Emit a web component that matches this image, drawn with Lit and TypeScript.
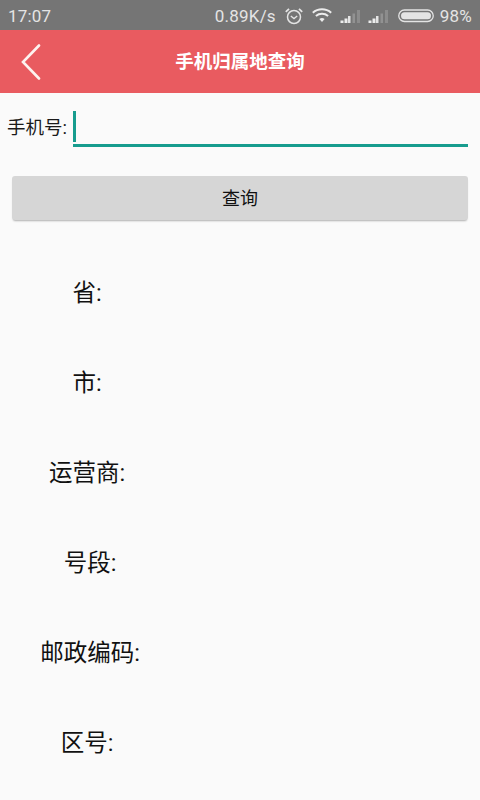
import { LitElement, html, css, svg } from "lit";
import { customElement } from "lit/decorators.js";

const rows: [string, number][] = [
  ["省:", 87],
  ["市:", 87],
  ["运营商:", 87],
  ["号段:", 90],
  ["邮政编码:", 90],
  ["区号:", 87],
];

const signal = svg`<svg class="sig" width="22" height="16" viewBox="0 0 22 16">
  <rect x="0.5" y="12.5" width="3" height="2.5" fill="#ededed"/>
  <rect x="4.5" y="10.5" width="3" height="4.5" fill="#ededed"/>
  <rect x="8" y="8" width="2.5" height="7" fill="#e4e4e4"/>
  <rect x="12.5" y="5.5" width="2.5" height="9.5" fill="#929292"/>
  <rect x="17" y="2" width="3" height="13" fill="#8c8c8c"/>
</svg>`;

@customElement("app-root")
export class AppRoot extends LitElement {
  static styles = css`
    :host {
      display: block;
      width: 480px;
      height: 800px;
      overflow: hidden;
      background: #fafafa;
      font-family: "Roboto", "Noto Sans CJK SC", sans-serif;
      color: #1a1a1a;
    }
    .status {
      height: 30px;
      box-sizing: border-box;
      background: #757575;
      color: #e4e4e4;
      display: flex;
      align-items: center;
      justify-content: space-between;
      padding: 1px 8px 0 8px;
      font-size: 17px;
      letter-spacing: 0.2px;
    }
    .status-right {
      display: flex;
      align-items: center;
    }
    .speed {
      margin-right: 8px;
    }
    .alarm {
      margin-right: 8px;
    }
    .wifi {
      margin-right: 8px;
    }
    .sig {
      margin-right: 6px;
    }
    .batt {
      margin: 0 6px 0 2px;
    }
    .appbar {
      height: 63px;
      background: #e95b60;
      display: grid;
      grid-template-columns: 1fr auto 1fr;
      align-items: center;
      color: #fff;
    }
    .back {
      display: block;
      margin-left: 20px;
    }
    .title {
      font-size: 18.5px;
      font-weight: 700;
      line-height: 24px;
    }
    .form {
      display: flex;
      align-items: center;
      padding: 14px 12px 0 7px;
    }
    .label {
      font-size: 18.5px;
      width: 66px;
      white-space: nowrap;
      padding-bottom: 3px;
    }
    .field {
      flex: 1;
      height: 37px;
      border-bottom: 3px solid #179c8e;
      display: flex;
      align-items: flex-end;
    }
    .caret {
      width: 3px;
      height: 31px;
      margin-bottom: 2px;
      background: #179c8e;
    }
    .btn {
      display: flex;
      align-items: center;
      justify-content: center;
      margin: 29px 12px 0 12px;
      height: 44px;
      padding-bottom: 2px;
      box-sizing: border-box;
      background: #d6d6d6;
      border-radius: 3px;
      box-shadow: 0 2px 2px -1px rgba(0, 0, 0, 0.3);
      font-size: 18px;
      color: #111;
    }
    .rows {
      margin-top: 26px;
      display: flex;
      flex-direction: column;
    }
    .row {
      height: 90px;
      display: flex;
      align-items: center;
      font-size: 23.5px;
      color: #111;
    }
    .row span {
      display: block;
      text-align: center;
      white-space: nowrap;
    }
  `;

  render() {
    return html`
      <div class="status">
        <span>17:07</span>
        <div class="status-right">
          <span class="speed">0.89K/s</span>
          <svg class="alarm" width="20" height="18" viewBox="0 0 20 18" fill="none" stroke="#e4e4e4">
            <circle cx="10" cy="10" r="6.5" stroke-width="1.5"/>
            <path d="M6.8 9 10 11.6 13.2 9" stroke-width="1.3"/>
            <path d="M1.8 4.8 5 1.8M18.2 4.8 15 1.8" stroke-width="1.8"/>
          </svg>
          <svg class="wifi" width="20" height="15" viewBox="0 0 20 15" fill="none" stroke="#ececec" stroke-width="2">
            <path d="M.8 4.8C6 .2 14 .2 19.2 4.8"/>
            <path d="M3.9 8C7.4 5 12.6 5 16.1 8"/>
            <path d="M7.4 11C9 9.8 11 9.8 12.6 11L10 14Z" fill="#ececec" stroke="none"/>
          </svg>
          ${signal} ${signal}
          <svg class="batt" width="36" height="14" viewBox="0 0 36 14">
            <rect x="0.75" y="1" width="34.5" height="11.5" rx="5.7" fill="none" stroke="#e4e4e4" stroke-width="1.3"/>
            <rect x="3" y="3.2" width="30" height="7" rx="3.5" fill="#e4e4e4"/>
          </svg>
          <span>98%</span>
        </div>
      </div>
      <div class="appbar">
        <svg class="back" width="21" height="36" viewBox="0 0 21 36" fill="none" stroke="#fdf3f0" stroke-width="2.6" stroke-linecap="round">
          <path d="M19 1.5 3 18 19 34.5"/>
        </svg>
        <div class="title">手机归属地查询</div>
        <div></div>
      </div>
      <div class="form">
        <div class="label">手机号:</div>
        <div class="field"><div class="caret"></div></div>
      </div>
      <div class="btn">查询</div>
      <div class="rows">
        ${rows.map(
          ([t, w]) => html`<div class="row"><span style="width:${w * 2}px">${t}</span></div>`
        )}
      </div>
    `;
  }
}
